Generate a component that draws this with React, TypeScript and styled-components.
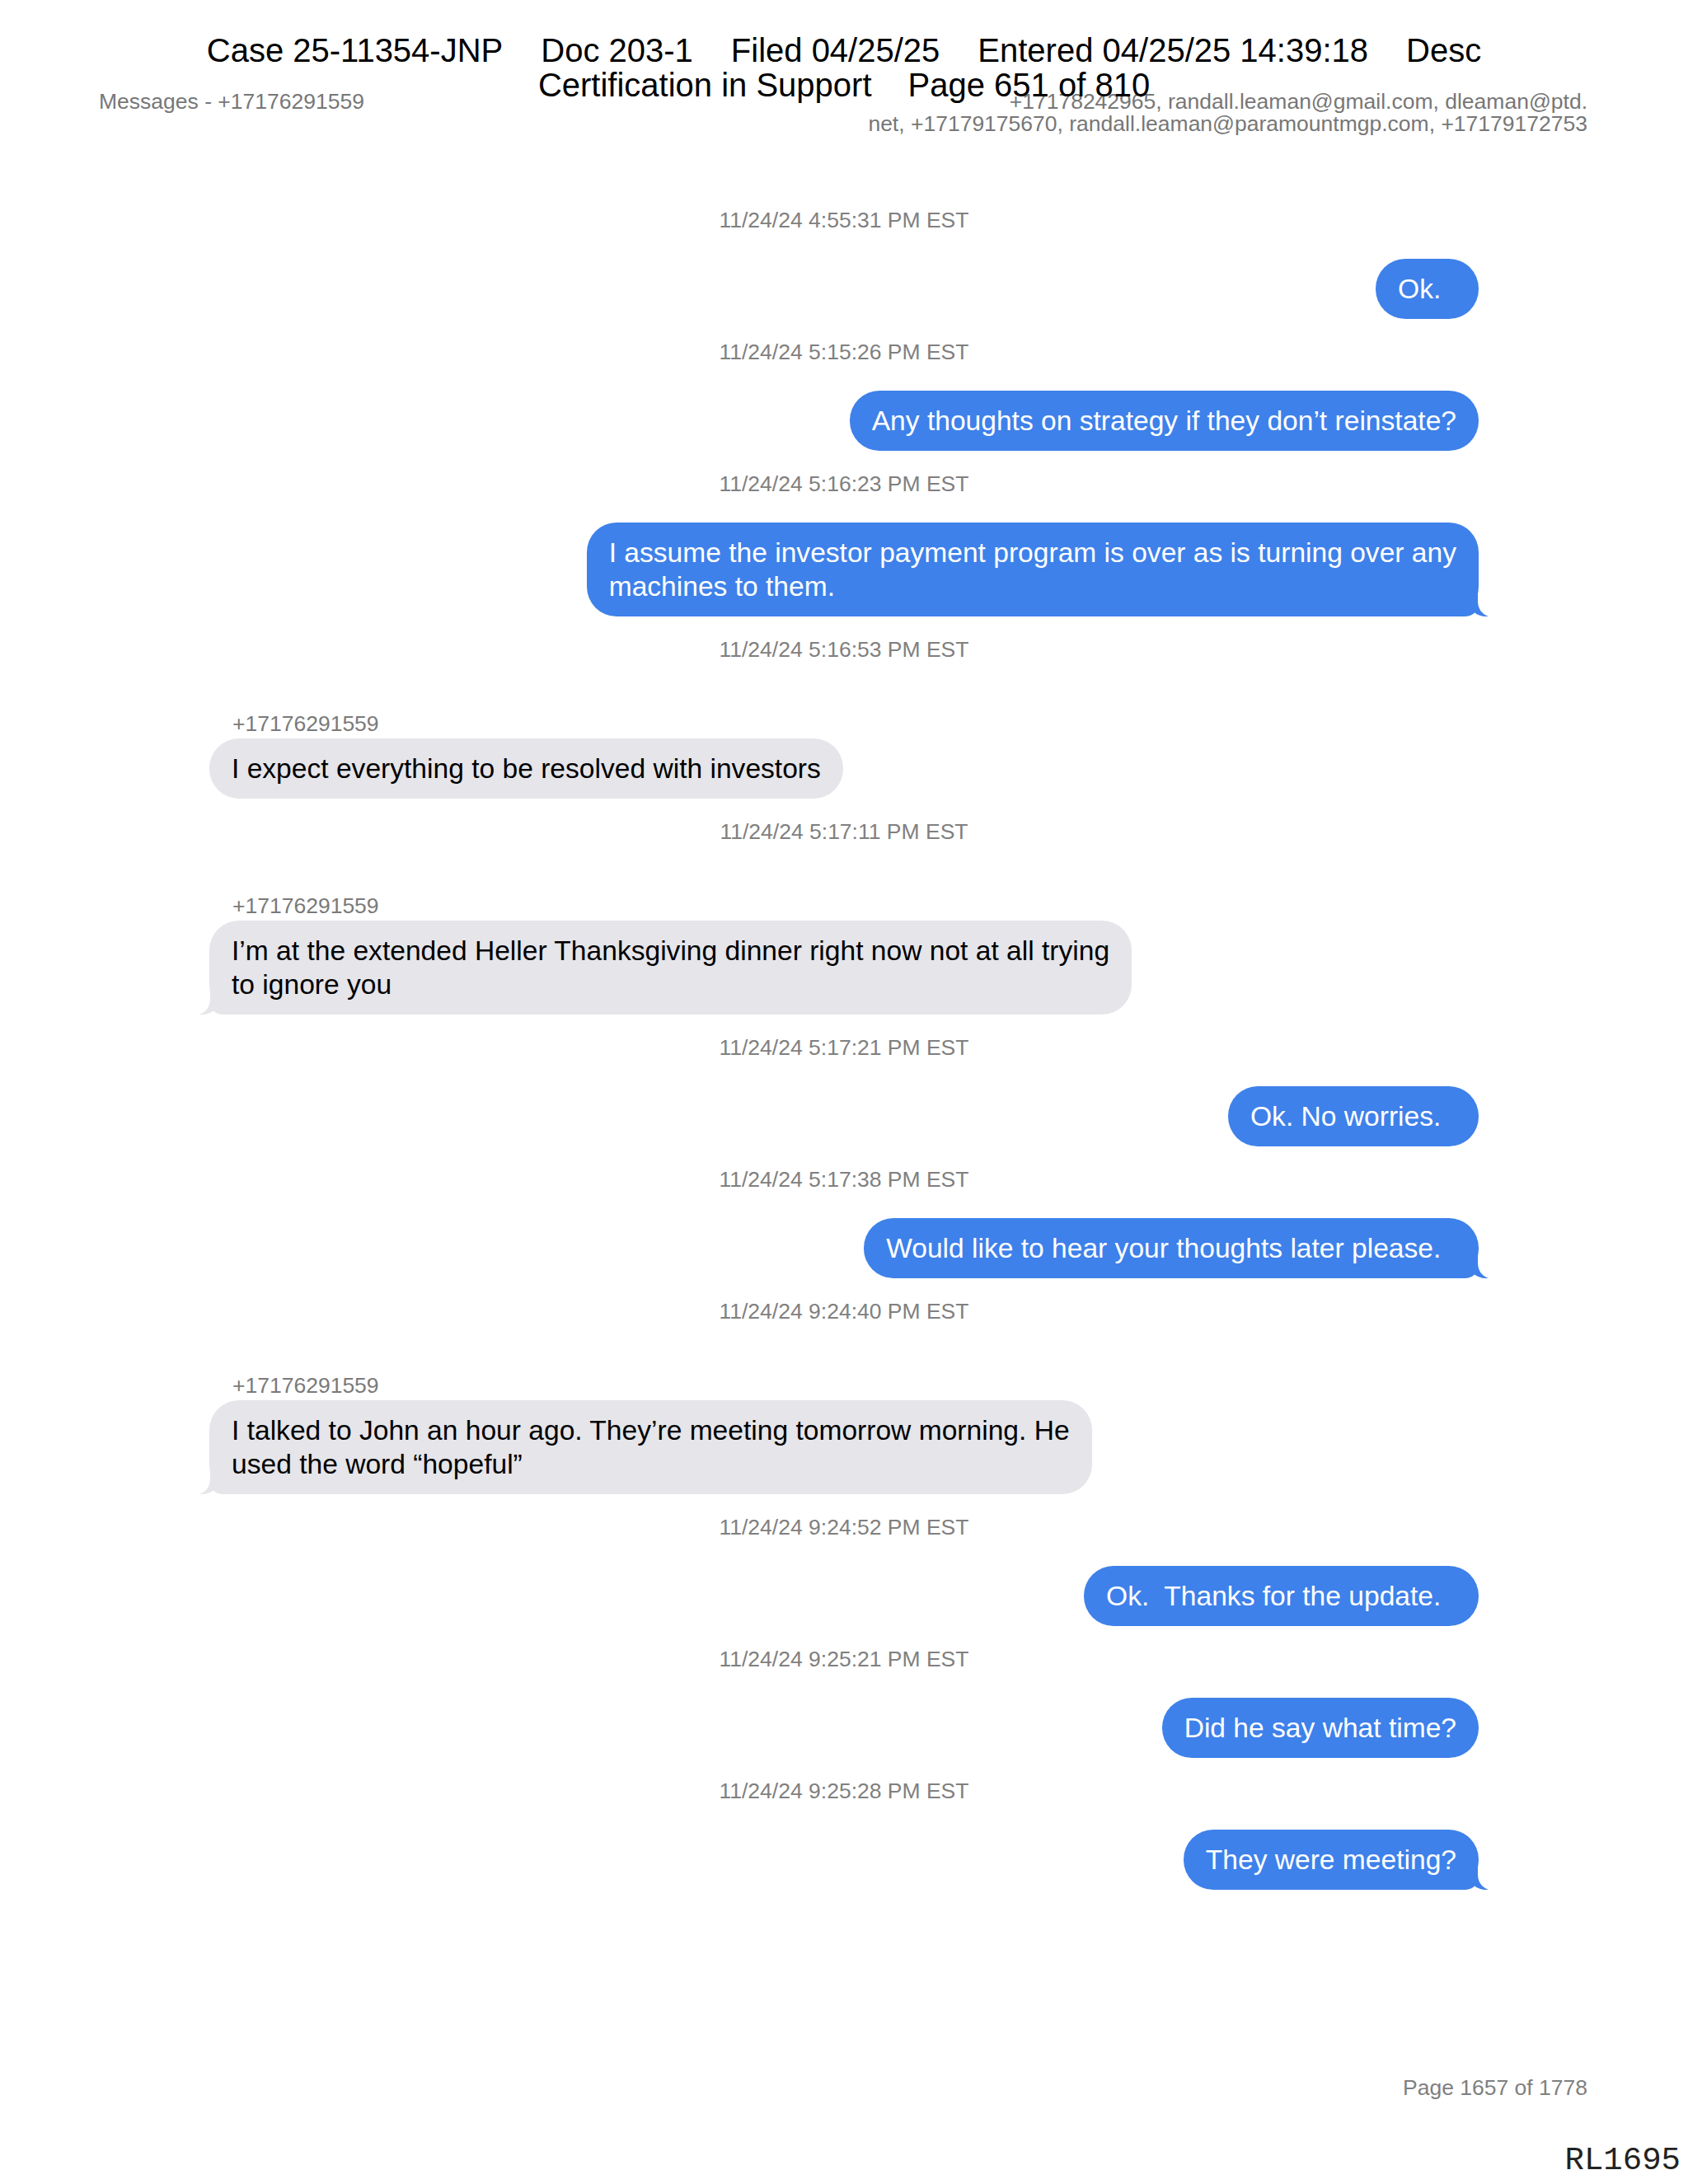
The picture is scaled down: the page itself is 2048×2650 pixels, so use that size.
import React from "react";
import styled, { createGlobalStyle } from "styled-components";

const GlobalStyle = createGlobalStyle`
  html, body {
    margin: 0;
    padding: 0;
    background: #ffffff;
  }
  body {
    font-family: "Liberation Sans", Arial, Helvetica, sans-serif;
  }
`;

const SENT_BLUE = "#3e81ea";
const RECV_GRAY = "#e5e5ea";

const Page = styled.div`
  position: relative;
  width: 2048px;
  height: 2650px;
  display: flex;
  flex-direction: column;
  background: #ffffff;
  overflow: hidden;
`;

const CaseStamp = styled.div`
  position: absolute;
  top: 40px;
  left: 0;
  right: 0;
  display: flex;
  flex-direction: column;
  align-items: center;
  font-size: 40px;
  line-height: 42px;
  color: #000000;
  z-index: 2;
  pointer-events: none;
`;

const StampLine = styled.div<{ $gap: number }>`
  display: flex;
  gap: ${(p) => p.$gap}px;
  white-space: nowrap;
`;

const HeaderRow = styled.header`
  display: flex;
  justify-content: space-between;
  align-items: flex-start;
  padding: 110px 122px 0 120px;
  font-size: 26.5px;
  line-height: 27px;
  color: #777777;
`;

const HeaderTitle = styled.div`
  white-space: nowrap;
`;

const Participants = styled.div`
  text-align: right;
  white-space: nowrap;
`;

const Thread = styled.main`
  width: 1540px;
  margin: 88px auto 0;
  display: flex;
  flex-direction: column;
`;

const Timestamp = styled.div<{ $first?: boolean }>`
  margin-top: ${(p) => (p.$first ? 0 : 25)}px;
  text-align: center;
  font-size: 26.5px;
  line-height: 30px;
  color: #808080;
`;

const SentRow = styled.div`
  margin-top: 32px;
  display: flex;
  justify-content: flex-end;
`;

const ReceivedGroup = styled.div`
  margin-top: 60px;
  display: flex;
  flex-direction: column;
  align-items: flex-start;
`;

const SenderLabel = styled.div`
  padding-left: 28px;
  font-size: 26.5px;
  line-height: 30px;
  color: #7a7a7a;
`;

const Bubble = styled.div<{ $sent: boolean }>`
  position: relative;
  isolation: isolate;
  max-width: 1200px;
  margin-top: ${(p) => (p.$sent ? 0 : 3)}px;
  padding: 16px 27px;
  border-radius: 36px;
  background: ${(p) => (p.$sent ? SENT_BLUE : RECV_GRAY)};
  color: ${(p) => (p.$sent ? "#ffffff" : "#000000")};
  font-size: 33.6px;
  line-height: 41px;
  white-space: break-spaces;
`;

const TailMark = styled.svg<{ $sent: boolean }>`
  position: absolute;
  z-index: -1;
  bottom: 0;
  width: 48px;
  height: 34px;
  ${(p) =>
    p.$sent
      ? "right: -13px;"
      : "left: -13px; transform: scaleX(-1);"}
`;

const Footer = styled.footer`
  margin-top: auto;
  display: flex;
  flex-direction: column;
  align-items: flex-end;
  padding-bottom: 8px;
`;

const PageNumber = styled.div`
  padding-right: 122px;
  font-size: 26.5px;
  line-height: 30px;
  color: #7f7f7f;
`;

const Bates = styled.div`
  margin-top: 54px;
  padding-right: 9px;
  font-family: "Liberation Mono", "Courier New", monospace;
  font-size: 39px;
  line-height: 40px;
  color: #222222;
`;

function Tail({ sent }: { sent: boolean }) {
  return (
    <TailMark $sent={sent} viewBox="0 0 48 34" aria-hidden="true">
      <path
        d="M0 0 H34 V15 C34 25 39 31 47 34 C41 34.6 35 33 30 29.5 C27 32.5 23 34 16 34 H0 Z"
        fill={sent ? SENT_BLUE : RECV_GRAY}
      />
    </TailMark>
  );
}

type Entry = {
  time: string;
  text: string;
  from?: string;
  tail?: boolean;
};

const SENDER = "+17176291559";

const entries: Entry[] = [
  { time: "11/24/24 4:55:31 PM EST", text: "Ok.  " },
  {
    time: "11/24/24 5:15:26 PM EST",
    text: "Any thoughts on strategy if they don\u2019t reinstate?",
  },
  {
    time: "11/24/24 5:16:23 PM EST",
    text:
      "I assume the investor payment program is over as is turning over any\nmachines to them.",
    tail: true,
  },
  {
    time: "11/24/24 5:16:53 PM EST",
    from: SENDER,
    text: "I expect everything to be resolved with investors",
  },
  {
    time: "11/24/24 5:17:11 PM EST",
    from: SENDER,
    text:
      "I\u2019m at the extended Heller Thanksgiving dinner right now not at all trying\nto ignore you",
    tail: true,
  },
  { time: "11/24/24 5:17:21 PM EST", text: "Ok. No worries.  " },
  {
    time: "11/24/24 5:17:38 PM EST",
    text: "Would like to hear your thoughts later please.  ",
    tail: true,
  },
  {
    time: "11/24/24 9:24:40 PM EST",
    from: SENDER,
    text:
      "I talked to John an hour ago. They\u2019re meeting tomorrow morning. He\nused the word \u201chopeful\u201d",
    tail: true,
  },
  { time: "11/24/24 9:24:52 PM EST", text: "Ok.  Thanks for the update.  " },
  { time: "11/24/24 9:25:21 PM EST", text: "Did he say what time?" },
  { time: "11/24/24 9:25:28 PM EST", text: "They were meeting?", tail: true },
];

function MessageEntry({ entry, first }: { entry: Entry; first: boolean }) {
  const sent = !entry.from;
  const bubble = (
    <Bubble $sent={sent}>
      {entry.text}
      {entry.tail && <Tail sent={sent} />}
    </Bubble>
  );
  return (
    <>
      <Timestamp $first={first}>{entry.time}</Timestamp>
      {sent ? (
        <SentRow>{bubble}</SentRow>
      ) : (
        <ReceivedGroup>
          <SenderLabel>{entry.from}</SenderLabel>
          {bubble}
        </ReceivedGroup>
      )}
    </>
  );
}

export default function App() {
  return (
    <>
      <GlobalStyle />
      <Page>
        <CaseStamp>
          <StampLine $gap={46}>
            <span>Case 25-11354-JNP</span>
            <span>Doc 203-1</span>
            <span>Filed 04/25/25</span>
            <span>Entered 04/25/25 14:39:18</span>
            <span>Desc</span>
          </StampLine>
          <StampLine $gap={44}>
            <span>Certification in Support</span>
            <span>Page 651 of 810</span>
          </StampLine>
        </CaseStamp>

        <HeaderRow>
          <HeaderTitle>Messages - +17176291559</HeaderTitle>
          <Participants>
            +17178242965, randall.leaman@gmail.com, dleaman@ptd.
            <br />
            net, +17179175670, randall.leaman@paramountmgp.com, +17179172753
          </Participants>
        </HeaderRow>

        <Thread>
          {entries.map((e, i) => (
            <MessageEntry key={i} entry={e} first={i === 0} />
          ))}
        </Thread>

        <Footer>
          <PageNumber>Page 1657 of 1778</PageNumber>
          <Bates>RL1695</Bates>
        </Footer>
      </Page>
    </>
  );
}
